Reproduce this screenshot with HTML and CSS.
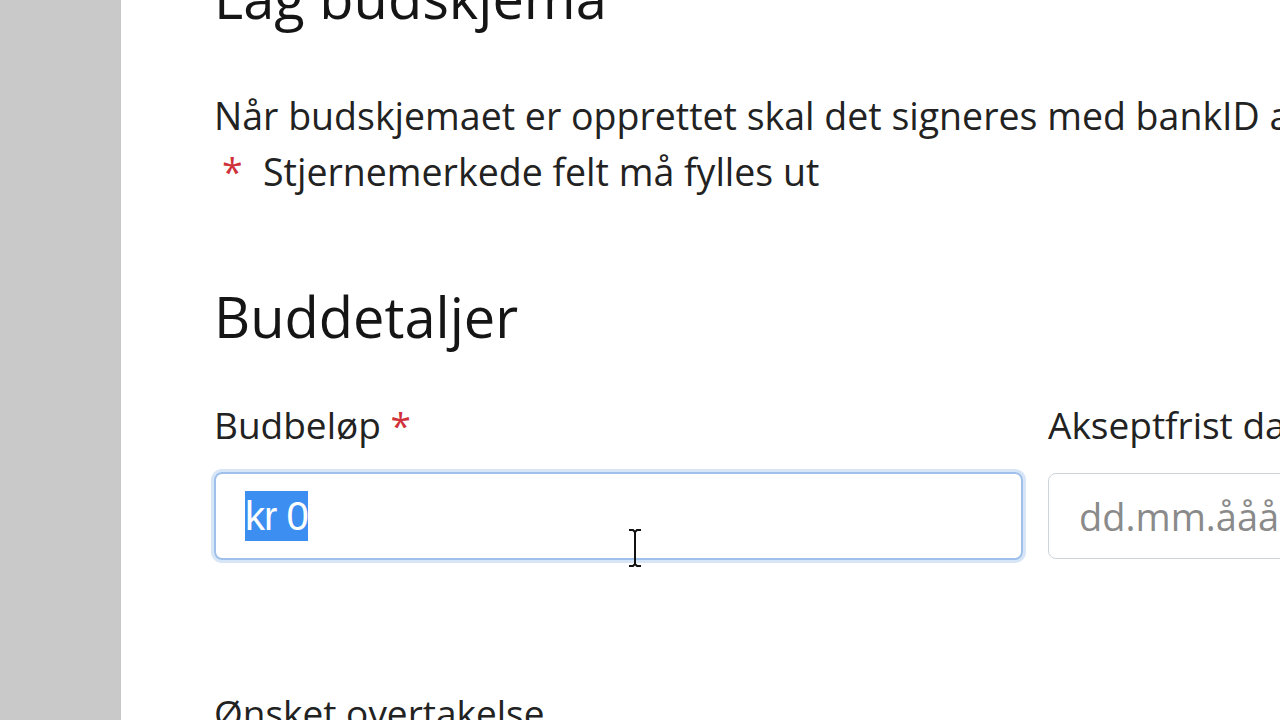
FILE: index.html
```html
<!DOCTYPE html>
<html lang="no">
<head>
<meta charset="utf-8">
<link rel="stylesheet" href="styles.css">
</head>
<body>
<div class="page">
  <aside class="rail"></aside>
  <main class="main">
    <h1 class="title">Lag budskjema</h1>
    <p class="intro">Når budskjemaet er opprettet skal det signeres med bankID av alle budgivere.</p>
    <p class="note"><span class="req">*</span>Stjernemerkede felt må fylles ut</p>
    <h2 class="section">Buddetaljer</h2>
    <div class="fields">
      <div class="field">
        <label class="label">Budbeløp <span class="req-small">*</span></label>
        <div class="input focused">
          <span class="selected">kr 0</span>
          <svg class="ibeam" width="20" height="40" viewBox="0 0 20 40"><path d="M4 2h4l2 2 2-2h4M10 4v32M4 38h4l2-2 2 2h4" fill="none" stroke="#111" stroke-width="2"/></svg>
        </div>
      </div>
      <div class="field">
        <label class="label">Akseptfrist dato <span class="req-small">*</span></label>
        <div class="input"><span class="placeholder">dd.mm.åååå</span></div>
      </div>
    </div>
    <div class="label next">Ønsket overtakelse</div>
  </main>
</div>
</body>
</html>
```
FILE: styles.css
```css
html, body {
  margin: 0;
  padding: 0;
  background: #ffffff;
  overflow: hidden;
}
.page {
  display: flex;
  width: 1280px;
  height: 720px;
  overflow: hidden;
  font-family: "Open Sans", "Noto Sans", sans-serif;
  color: #1a1a1a;
}
.rail {
  flex: 0 0 121px;
  background: #c9c9c9;
}
.main {
  flex: 1;
  padding-left: 93px;
  min-width: 0;
  white-space: nowrap;
}
.title {
  font-weight: 400;
  font-size: 56px;
  line-height: 1;
  margin: -31px 0 0 0;
  color: #151515;
}
.intro {
  font-size: 37.5px;
  line-height: 56px;
  margin: 63px 0 0 0;
  color: #222;
}
.note {
  font-size: 37.5px;
  line-height: 56px;
  margin: 0;
  color: #222;
}
.req {
  color: #d0313a;
  display: inline-block;
  margin-left: 8px;
  width: 41px;
}
.section {
  font-weight: 400;
  font-size: 56px;
  line-height: 1;
  margin: 88px 0 0 0;
  color: #151515;
}
.fields {
  display: grid;
  grid-template-columns: 809px 400px;
  column-gap: 25px;
  margin-top: 57px;
}
.field {
  display: flex;
  flex-direction: column;
}
.label {
  font-size: 37px;
  line-height: 48px;
  color: #222;
  display: block;
}
.req-small {
  color: #d0313a;
}
.input {
  position: relative;
  margin-top: 24px;
  height: 86px;
  border: 1px solid #cfd4d9;
  border-radius: 8px;
  display: flex;
  align-items: center;
  padding-left: 30px;
  font-size: 38px;
  box-sizing: border-box;
}
.input.focused {
  border: 2px solid #9ec0ea;
  box-shadow: 0 0 0 3px #d7e6f7;
  padding-left: 29px;
  height: 88px;
  margin-top: 23px;
}
.selected {
  background: #3c8ef0;
  color: #ffffff;
  font-family: "Liberation Sans", Arial, sans-serif;
  font-size: 40px;
  line-height: 50px;
  letter-spacing: -1px;
}
.placeholder {
  color: #8a8a8a;
}
.ibeam {
  position: absolute;
  left: 409px;
  top: 54px;
}
.next {
  margin-top: 129px;
}
```
